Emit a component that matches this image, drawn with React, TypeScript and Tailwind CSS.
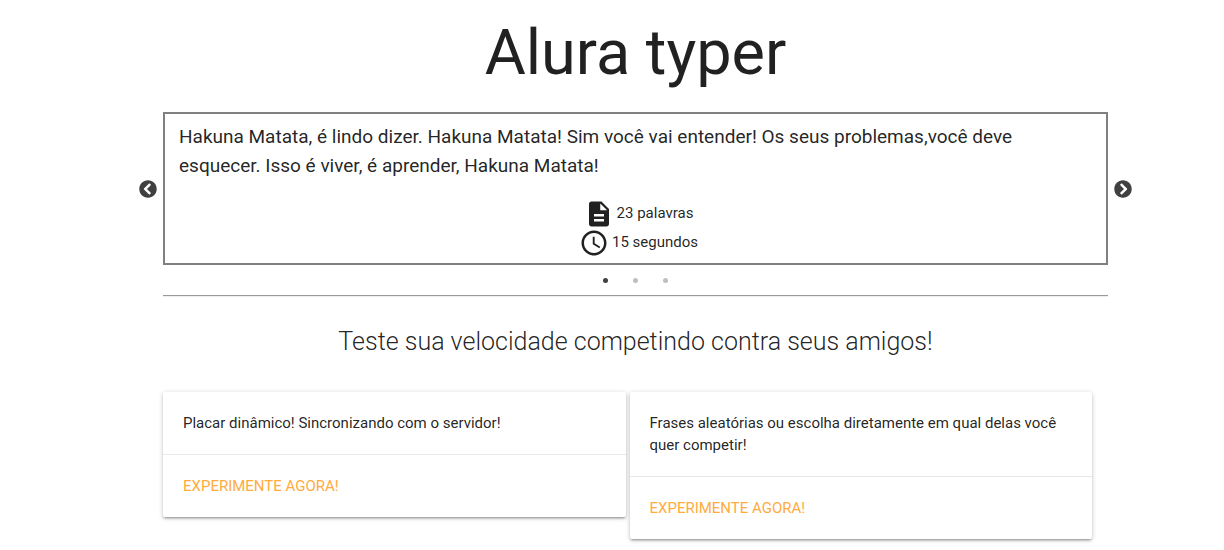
import { useState } from 'react';
import { FaChevronCircleLeft, FaChevronCircleRight } from 'react-icons/fa';
import { MdAccessTime, MdDescription } from 'react-icons/md';

const phrase =
  'Hakuna Matata, é lindo dizer. Hakuna Matata! Sim você vai entender! Os seus problemas,você deve esquecer. Isso é viver, é aprender, Hakuna Matata!';

function Card({ text }: { text: string }) {
  return (
    <article className="min-w-0 flex-1 rounded-xs bg-white shadow-[0_2px_2px_0_rgba(0,0,0,0.14),0_3px_1px_-2px_rgba(0,0,0,0.12),0_1px_5px_0_rgba(0,0,0,0.2)]">
      <p className="p-5 leading-[22px] text-black/87">{text}</p>
      <div className="border-t border-[#e8e8e8] px-5 py-5 leading-[22px]">
        <a href="#experimente" className="uppercase text-[#ffab40]">
          Experimente agora!
        </a>
      </div>
    </article>
  );
}

export default function App() {
  const [slide, setSlide] = useState(0);

  return (
    <main className="bg-white pr-[92px] pl-[139px] text-[15px] text-black/87 [font-family:Roboto,sans-serif]">
      <h1 className="pt-[18px] text-center text-[63px] leading-[70px]">Alura typer</h1>

      <section aria-label="Frases" className="mt-6">
        <div className="flex items-center gap-[6px]">
          <button
            type="button"
            aria-label="Anterior"
            className="shrink-0 text-[#404040]"
            onClick={() => setSlide((slide + 2) % 3)}
          >
            <FaChevronCircleLeft className="size-[18px]" />
          </button>
          <div className="min-w-0 flex-1 border-2 border-[#808080] px-[14px] pt-2 pb-[6px]">
            <p className="text-[19px] leading-[29px]">{phrase}</p>
            <ul className="mt-[19px] flex flex-col items-center pl-[6px]">
              <li className="flex h-[29px] items-center gap-[3px]">
                <MdDescription className="size-[30px]" />
                <span>23 palavras</span>
              </li>
              <li className="flex h-[29px] items-center gap-[3px]">
                <MdAccessTime className="size-[30px]" />
                <span>15 segundos</span>
              </li>
            </ul>
          </div>
          <button
            type="button"
            aria-label="Próxima"
            className="shrink-0 text-[#404040]"
            onClick={() => setSlide((slide + 1) % 3)}
          >
            <FaChevronCircleRight className="size-[18px]" />
          </button>
        </div>
        <div className="flex h-[30px] items-center justify-center">
          {[0, 1, 2].map((i) => (
            <button
              key={i}
              type="button"
              aria-label={`Frase ${i + 1}`}
              className="flex h-5 w-[30px] items-center justify-center"
              onClick={() => setSlide(i)}
            >
              <span className={i === slide ? 'size-[5px] rounded-full bg-[#404040]' : 'size-[5px] rounded-full bg-[#bfbfbf]'} />
            </button>
          ))}
        </div>
      </section>

      <div className="px-6">
        <hr className="border-t border-b border-t-[#9a9a9a] border-b-[#eeeeee]" />
        <h2 className="mt-[29px] text-center text-[25px] font-light leading-8">
          Teste sua velocidade competindo contra seus amigos!
        </h2>
        <div className="mt-[34px] flex items-start gap-1 pr-4 pb-[10px]">
          <Card text="Placar dinâmico! Sincronizando com o servidor!" />
          <Card text="Frases aleatórias ou escolha diretamente em qual delas você quer competir!" />
        </div>
      </div>
    </main>
  );
}
